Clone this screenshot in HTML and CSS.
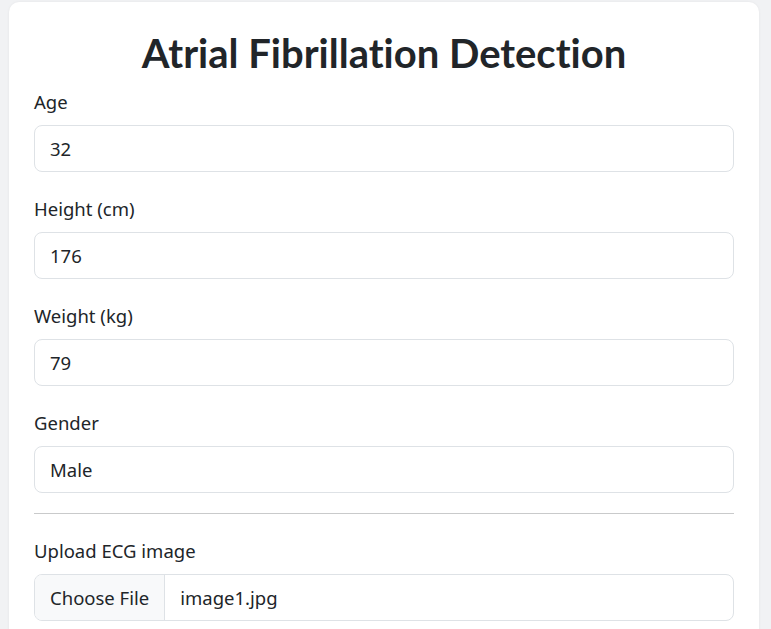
FILE: index.html
```html
<!DOCTYPE html>
<html lang="en">
<head>
<meta charset="utf-8">
<title>Atrial Fibrillation Detection</title>
<link rel="stylesheet" href="styles.css">
</head>
<body>
<main class="card">
  <h1 class="title">Atrial Fibrillation Detection</h1>
  <form class="form">
    <div class="field">
      <label class="label" for="age">Age</label>
      <input class="control" id="age" type="text" value="32">
    </div>
    <div class="field">
      <label class="label" for="height">Height (cm)</label>
      <input class="control" id="height" type="text" value="176">
    </div>
    <div class="field">
      <label class="label" for="weight">Weight (kg)</label>
      <input class="control" id="weight" type="text" value="79">
    </div>
    <div class="field">
      <label class="label" for="gender">Gender</label>
      <div class="control" id="gender">Male</div>
    </div>
    <hr class="divider">
    <div class="field">
      <label class="label" for="ecg">Upload ECG image</label>
      <div class="control file" id="ecg">
        <span class="file-btn">Choose File</span>
        <span class="file-name">image1.jpg</span>
      </div>
    </div>
  </form>
</main>
</body>
</html>
```

FILE: styles.css
```css
* { box-sizing: border-box; }
html, body { margin: 0; }
body {
  background: #f1f2f4;
  padding: 2px 0 0 9px;
  font-family: "Noto Sans", "Open Sans", sans-serif;
  color: #212529;
}
.card {
  width: 750px;
  background: #fff;
  border-radius: 10px;
  box-shadow: 0 0 3px rgba(0,0,0,0.06);
  padding: 27px 25px 40px;
}
.title {
  margin: 0 0 10px;
  font-family: "Lato", "Noto Sans", sans-serif;
  font-size: 40px;
  font-weight: 700;
  line-height: 48px;
  text-align: center;
  font-variant-ligatures: none;
}
.form { display: flex; flex-direction: column; }
.field { display: flex; flex-direction: column; margin-bottom: 22px; }
.label {
  font-size: 18.5px;
  line-height: 30px;
  margin-bottom: 8px;
}
.control {
  height: 47px;
  border: 1px solid #dee2e6;
  border-radius: 8px;
  padding: 0 15px;
  font-family: inherit;
  font-size: 18.5px;
  color: #212529;
  background: #fff;
  display: flex;
  align-items: center;
  width: 100%;
}
.divider {
  border: 0;
  border-top: 1px solid #c9cacb;
  margin: -2px 0 22px;
  width: 100%;
}
.file { padding: 0; overflow: hidden; }
.file-btn {
  height: 100%;
  display: flex;
  align-items: center;
  padding: 0 15px;
  background: #f8f9fa;
  border-right: 1px solid #dee2e6;
}
.file-name { padding-left: 15px; }
```
